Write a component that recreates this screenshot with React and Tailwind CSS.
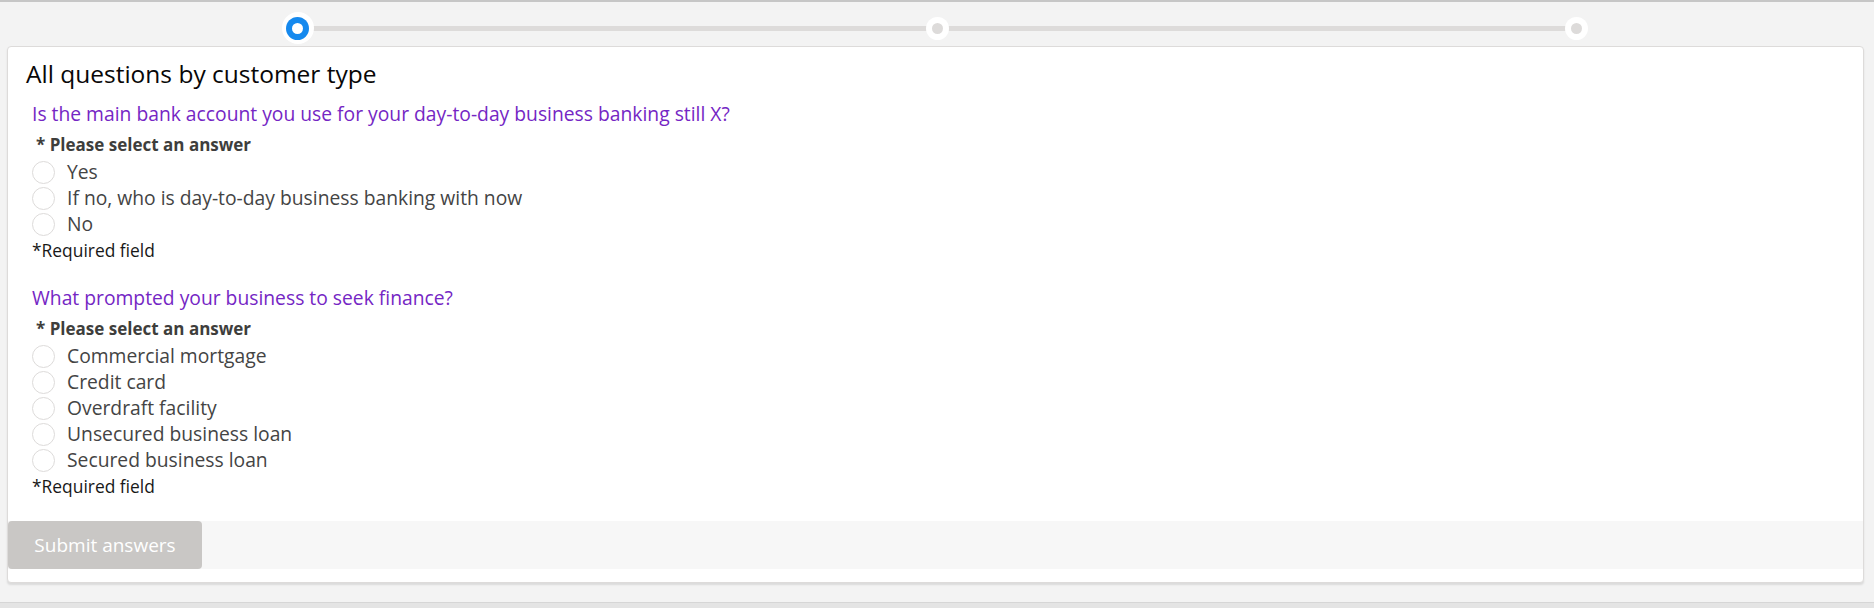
import React, { useState } from 'react';

const questions = [
  {
    id: 'q1',
    text: 'Is the main bank account you use for your day-to-day business banking still X?',
    options: ['Yes', 'If no, who is day-to-day business banking with now', 'No']
  },
  {
    id: 'q2',
    text: 'What prompted your business to seek finance?',
    options: [
      'Commercial mortgage',
      'Credit card',
      'Overdraft facility',
      'Unsecured business loan',
      'Secured business loan'
    ]
  }
];

const steps = [true, false, false];

function Stepper() {
  return (
    <div className="relative mx-auto mt-[10px] mb-[2px] h-[32px] w-[1311px]">
      {/* track */}
      <div className="absolute left-[16px] right-[16px] top-[14px] h-[5px] bg-[#dddbda]" />
      <div className="relative flex h-full items-center justify-between">
        {steps.map((active, i) =>
          active ? (
            <span
              key={i}
              className="flex h-[32px] w-[32px] items-center justify-center rounded-full bg-white"
            >
              <span className="flex h-[23px] w-[23px] items-center justify-center rounded-full bg-[#1589ee]">
                <span className="h-[11px] w-[11px] rounded-full bg-white" />
              </span>
            </span>
          ) : (
            <span key={i} className="flex h-[32px] w-[32px] items-center justify-center">
              <span className="flex h-[23px] w-[23px] items-center justify-center rounded-full bg-white">
                <span className="h-[11px] w-[11px] rounded-full bg-[#dddbda]" />
              </span>
            </span>
          )
        )}
      </div>
    </div>
  );
}

function Question({ q, value, onChange, first }) {
  return (
    <div className={first ? 'mt-[14px]' : 'mt-[26px]'}>
      <p className="h-[24px] whitespace-nowrap text-[19.3px] leading-[24px] text-[#7526c4]">{q.text}</p>
      <p className="mt-[9px] h-[20px] pl-[4px] text-[17px] font-bold leading-[20px] text-[#3e3e3c]">
        * Please select an answer
      </p>
      <div className="mt-[4px] flex flex-col">
        {q.options.map(opt => (
          <label key={opt} className="flex h-[26px] cursor-pointer items-center gap-[12px]">
            <input
              type="radio"
              name={q.id}
              checked={value === opt}
              onChange={() => onChange(opt)}
              className="sr-only"
            />
            <span className="h-[23px] w-[23px] shrink-0 rounded-full border border-[#dddbda] bg-white" />
            <span className="whitespace-nowrap text-[19.3px] leading-[24px] text-[#444444]">{opt}</span>
          </label>
        ))}
      </div>
      <p className="mt-[3px] h-[20px] text-[17.4px] leading-[20px] text-[#181818]">*Required field</p>
    </div>
  );
}

export default function App() {
  const [answers, setAnswers] = useState({});
  const done = questions.every(q => answers[q.id]);

  return (
    <div
      className="flex h-[608px] flex-col bg-[#f3f3f3]"
      style={{ fontFamily: '"Open Sans", "Liberation Sans", sans-serif' }}
    >
      <div className="h-[2px] bg-[#c6c6c6]" />
      <Stepper />

      {/* Card */}
      <div className="ml-[7px] mr-[10px] rounded-[4px] border border-[#dddbda] bg-white pb-[13px] pt-[13px] shadow-[0_2px_2px_rgba(0,0,0,0.1)]">
        <h2 className="h-[28px] whitespace-nowrap pl-[18px] text-[24.5px] leading-[28px] text-[#080707]">
          All questions by customer type
        </h2>
        <div className="pl-[24px]">
          {questions.map((q, i) => (
            <Question
              key={q.id}
              q={q}
              first={i === 0}
              value={answers[q.id]}
              onChange={v => setAnswers(a => ({ ...a, [q.id]: v }))}
            />
          ))}
        </div>

        {/* Footer */}
        <div className="mt-[25px] flex h-[48px] bg-[#f7f7f7]">
          <button
            disabled={!done}
            className="h-[48px] w-[194px] rounded-[4px] bg-[#c9c7c5] text-[19px] text-white"
          >
            Submit answers
          </button>
        </div>
      </div>

      <div className="flex-1" />
      <div className="h-[6px] border-t border-[#d6d6d6] bg-[#e4e4e4]" />
    </div>
  );
}
